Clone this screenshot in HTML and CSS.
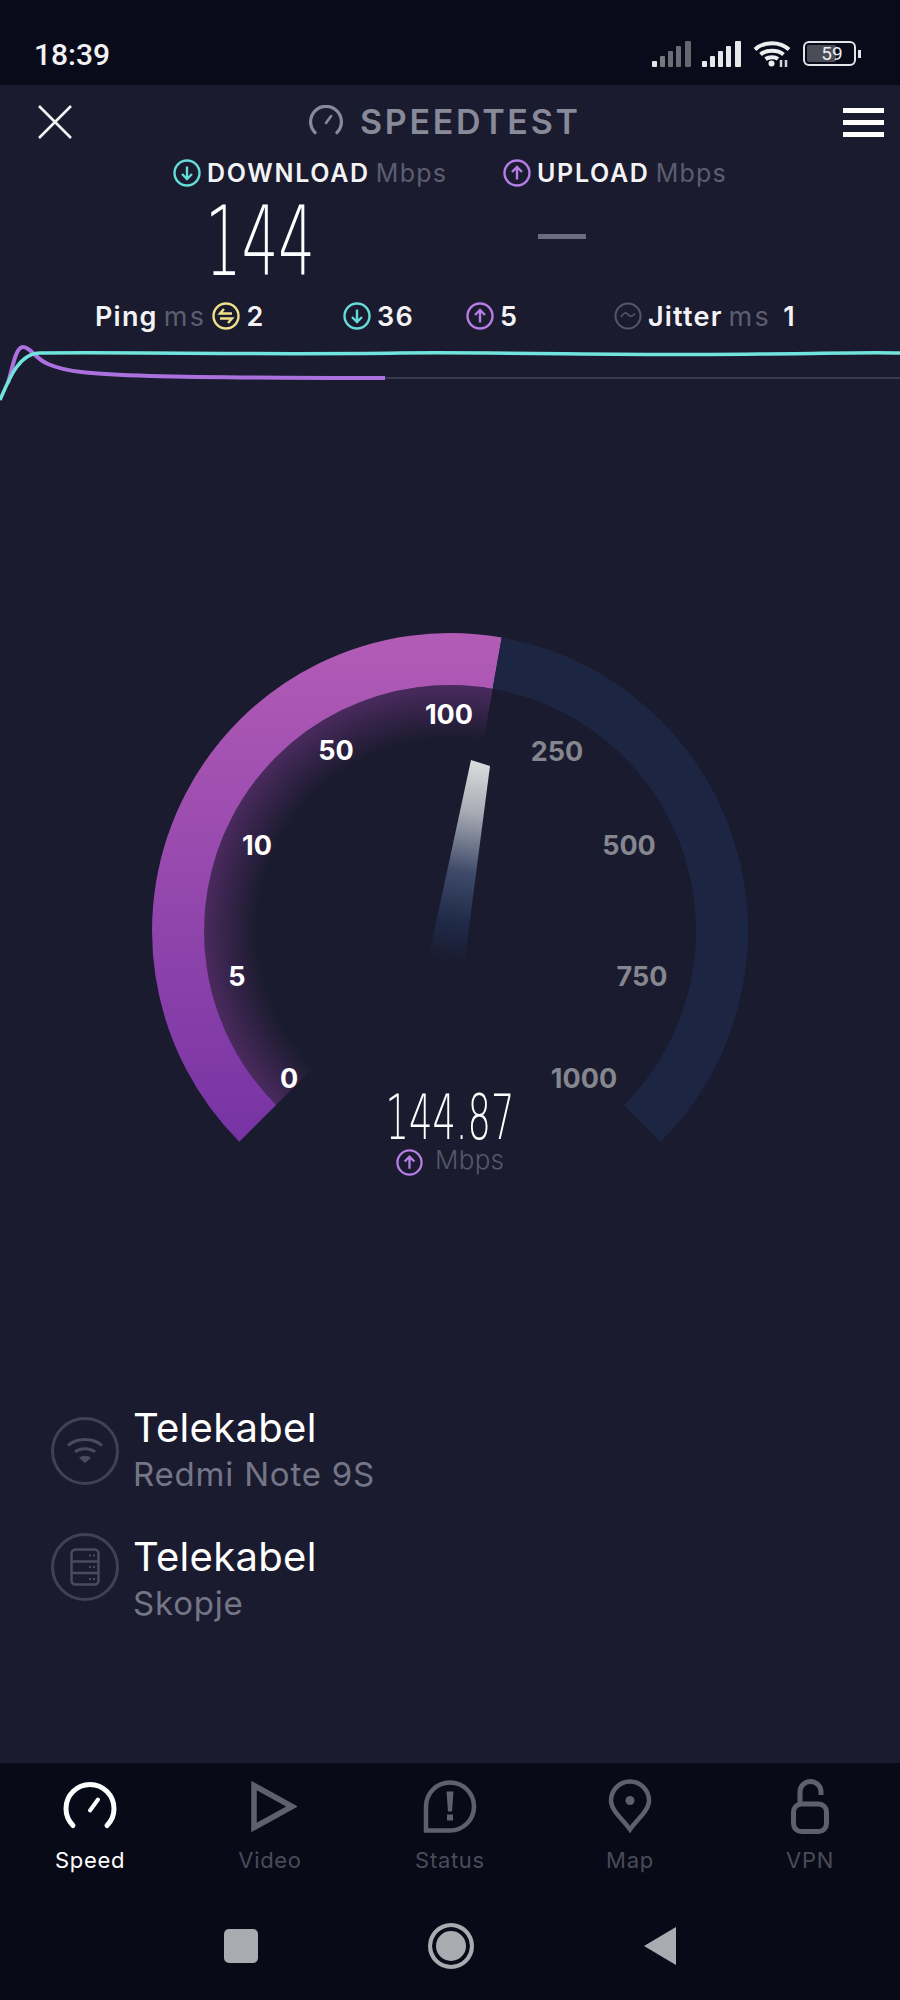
FILE: index.html
```html
<!DOCTYPE html>
<html lang="en">
<head>
    <meta charset="UTF-8">
    <meta name="viewport" content="width=device-width, initial-scale=1.0">
    <title>Speedtest</title>
    <link rel="stylesheet" href="styles.css">
</head>
<body>
    <svg class="defs" width="0" height="0">
        <symbol id="i-down" viewBox="0 0 28 28">
            <circle cx="14" cy="14" r="12.5" fill="none" stroke="currentColor" stroke-width="2.400"/>
            <path d="M14 7.5V20M9 15l5 5 5-5" fill="none" stroke="currentColor" stroke-width="2.400"/>
        </symbol>
        <symbol id="i-up" viewBox="0 0 28 28">
            <circle cx="14" cy="14" r="12.5" fill="none" stroke="currentColor" stroke-width="2.400"/>
            <path d="M14 20.5V8M9 13l5-5 5 5" fill="none" stroke="currentColor" stroke-width="2.400"/>
        </symbol>
        <symbol id="i-gauge" viewBox="0 0 56 48">
            <path d="M11 43A24 24 0 1 1 45 43" fill="none" stroke="currentColor" stroke-width="5" stroke-linecap="round"/>
            <path d="M28 28l8-11" fill="none" stroke="currentColor" stroke-width="4" stroke-linecap="round"/>
        </symbol>
    </svg>

    <div class="status">
        <span class="time">18:39</span>
        <div class="status-icons">
            <svg class="signal" width="40" height="26" viewBox="0 0 40 26">
                <rect x="0" y="20" width="5" height="6" rx="1" fill="#e4e4e6"/>
                <rect x="8" y="15" width="5" height="11" rx="1" fill="#77787f"/>
                <rect x="16" y="10" width="5" height="16" rx="1" fill="#6c6d74"/>
                <rect x="24" y="5" width="5" height="21" rx="1" fill="#6c6d74"/>
                <rect x="33" y="0" width="6" height="26" rx="1" fill="#66676e"/>
            </svg>
            <svg class="signal" width="40" height="26" viewBox="0 0 40 26">
                <rect x="0" y="20" width="5" height="6" rx="1" fill="#e8e8ea"/>
                <rect x="8" y="15" width="5" height="11" rx="1" fill="#e8e8ea"/>
                <rect x="16" y="10" width="5" height="16" rx="1" fill="#e8e8ea"/>
                <rect x="24" y="5" width="5" height="21" rx="1" fill="#e8e8ea"/>
                <rect x="33" y="0" width="6" height="26" rx="1" fill="#e8e8ea"/>
            </svg>
            <svg class="wifi" width="38" height="29" viewBox="0 0 38 29">
                <path d="M2 10.500C11 2 27 2 36 10.500M7.500 15.500C13 10.500 25 10.500 30.500 15.500M12.500 20C16 17.500 22 17.500 25 20" fill="none" stroke="#eeeef0" stroke-width="4"/>
                <circle cx="18.500" cy="24.500" r="3" fill="#eeeef0"/>
                <path d="M28 21v7M33 21v7" stroke="#d5d5d8" stroke-width="2.500"/>
            </svg>
            <div class="battery">
                <div class="battery-body">
                    <div class="battery-fill"></div>
                    <span class="battery-text">59</span>
                </div>
                <div class="battery-nub"></div>
            </div>
        </div>
    </div>

    <div class="topbar">
        <svg class="close" width="34" height="34" viewBox="0 0 34 34">
            <path d="M1 1l32 32M33 1L1 33" stroke="#f4f4f6" stroke-width="2.600" fill="none"/>
        </svg>
        <div class="brand">
            <svg class="brand-icon" width="36" height="31"><use href="#i-gauge"/></svg>
            <span class="brand-text">SPEEDTEST</span>
        </div>
        <div class="menu">
            <div class="menu-bar"></div>
            <div class="menu-bar"></div>
            <div class="menu-bar"></div>
        </div>
    </div>

    <div class="speeds">
        <div class="speed-head">
            <svg class="ic ic-down"><use href="#i-down"/></svg>
            <span class="head-label">DOWNLOAD</span>
            <span class="head-unit">Mbps</span>
        </div>
        <div class="speed-head">
            <svg class="ic ic-up"><use href="#i-up"/></svg>
            <span class="head-label">UPLOAD</span>
            <span class="head-unit">Mbps</span>
        </div>
        <div class="speed-value">144</div>
        <div class="speed-dash"></div>
    </div>

    <div class="stats">
        <div class="stat">
            <span class="stat-label">Ping</span>
            <span class="stat-unit">ms</span>
            <svg class="ic ic-ping" viewBox="0 0 28 28">
                <circle cx="14" cy="14" r="12.500" fill="none" stroke="currentColor" stroke-width="2.400"/>
                <path d="M20 11.500H8l4-4.500M8 16.500h12l-4 4.500" fill="none" stroke="currentColor" stroke-width="2.400"/>
            </svg>
            <span class="stat-label">2</span>
        </div>
        <div class="stat">
            <svg class="ic ic-down"><use href="#i-down"/></svg>
            <span class="stat-label">36</span>
        </div>
        <div class="stat">
            <svg class="ic ic-up"><use href="#i-up"/></svg>
            <span class="stat-label">5</span>
        </div>
        <div class="stat">
            <svg class="ic ic-jitter" viewBox="0 0 28 28">
                <circle cx="14" cy="14" r="12.500" fill="none" stroke="currentColor" stroke-width="2"/>
                <path d="M7 15c3-5 5-5 7-2.500s4 2.500 7-1" fill="none" stroke="currentColor" stroke-width="1.600"/>
            </svg>
            <span class="stat-label">Jitter</span>
            <span class="stat-unit">ms</span>
            <span class="stat-label stat-last">1</span>
        </div>
    </div>

    <svg class="graph" width="900" height="70" viewBox="0 340 900 70">
        <path d="M385 378H900" stroke="#46475a" stroke-width="1.500" fill="none"/>
        <path d="M8 383C13 365 16 347 23 347C31 347 34 358 48 364C66 372 90 374 150 376C230 378 300 378 385 378" stroke="#ab72df" stroke-width="4" fill="none"/>
        <path d="M0 400C8 382 18 353 40 353C150 352 260 355 400 353C520 352 640 356 760 354C810 354 860 352 900 353" stroke="#70e4dd" stroke-width="3.500" fill="none"/>
    </svg>

    <svg class="gauge" width="900" height="570" viewBox="0 620 900 570">
        <defs>
            <linearGradient id="arc-fill" gradientUnits="userSpaceOnUse" x1="0" y1="633" x2="0" y2="1141">
                <stop offset="0" stop-color="#b25cb6"/>
                <stop offset="1" stop-color="#7733a4"/>
            </linearGradient>
            <radialGradient id="arc-glow" gradientUnits="userSpaceOnUse" cx="450" cy="931" r="246">
                <stop offset="0.78" stop-color="#4a2a5e" stop-opacity="0"/>
                <stop offset="1" stop-color="#4a2a5e"/>
            </radialGradient>
            <linearGradient id="needle-fill" gradientUnits="userSpaceOnUse" x1="480" y1="762" x2="446" y2="962">
                <stop offset="0" stop-color="#dcdcde"/>
                <stop offset="0.25" stop-color="#a9abb5"/>
                <stop offset="0.55" stop-color="#3e4a69"/>
                <stop offset="0.8" stop-color="#1f2a48"/>
                <stop offset="1" stop-color="#1a1b2e"/>
            </linearGradient>
        </defs>
        <path d="M276 1105A246 246 0 0 1 492.700 688.700L450 931Z" fill="url(#arc-glow)"/>
        <path class="arc" d="M257.700 1123.300A272 272 0 0 1 497.200 663.100" stroke="url(#arc-fill)"/>
        <path class="arc" d="M497.200 663.100A272 272 0 0 1 642.300 1123.300" stroke="#1c2642"/>
        <path d="M471 760L490 766L464 966L428 960Z" fill="url(#needle-fill)"/>

        <text class="tick" x="449" y="724">100</text>
        <text class="tick" x="336" y="760">50</text>
        <text class="tick" x="257" y="855">10</text>
        <text class="tick" x="237" y="986">5</text>
        <text class="tick" x="289" y="1088">0</text>
        <text class="tick tick-off" x="557" y="761">250</text>
        <text class="tick tick-off" x="629" y="855">500</text>
        <text class="tick tick-off" x="642" y="986">750</text>
        <text class="tick tick-off" x="584" y="1088">1000</text>

        <text class="live" x="0" y="0" transform="translate(450 1139) scale(0.585 1)">144.87</text>
        <use href="#i-up" class="ic-up" x="396" y="1149" width="27" height="27"/>
        <text class="live-unit" x="435" y="1169">Mbps</text>
    </svg>

    <div class="networks">
        <div class="network">
            <div class="net-icon">
                <svg width="36" height="30" viewBox="0 0 36 30">
                    <path d="M1 9.500C10 1.500 26 1.500 35 9.500M8 16c5-4.500 15-4.500 20 0" fill="none" stroke="#4a4c5e" stroke-width="3"/>
                    <path d="M18 27l-6-5c3-3 9-3 12 0z" fill="#4a4c5e"/>
                </svg>
            </div>
            <div>
                <div class="net-name">Telekabel</div>
                <div class="net-sub">Redmi Note 9S</div>
            </div>
        </div>
        <div class="network">
            <div class="net-icon">
                <svg width="30" height="38" viewBox="0 0 30 38">
                    <rect x="1.500" y="1.500" width="27" height="35" rx="4" fill="none" stroke="#4a4c5e" stroke-width="2.500"/>
                    <path d="M1.500 13.500h27M1.500 25h27" stroke="#4a4c5e" stroke-width="2.500"/>
                    <path d="M19 7.500h6M19 19h6M19 31h6" stroke="#4a4c5e" stroke-width="2" stroke-dasharray="2 2"/>
                </svg>
            </div>
            <div class="net-lower">
                <div class="net-name">Telekabel</div>
                <div class="net-sub">Skopje</div>
            </div>
        </div>
    </div>

    <div class="bottom">
        <nav class="tabs">
            <div class="tab tab-on">
                <svg class="tab-icon" width="56" height="48"><use href="#i-gauge"/></svg>
                <span>Speed</span>
            </div>
            <div class="tab">
                <svg class="tab-icon tab-play" width="46" height="52" viewBox="0 0 46 52">
                    <path d="M3 5L41 26L3 47Z" fill="none" stroke="currentColor" stroke-width="5.500"/>
                </svg>
                <span>Video</span>
            </div>
            <div class="tab">
                <svg class="tab-icon" width="54" height="54" viewBox="0 0 54 54">
                    <path d="M3 51V27A24 24 0 1 1 27 51Z" fill="none" stroke="currentColor" stroke-width="4.500"/>
                    <path d="M23.500 12h7l-1.500 20h-4z" fill="currentColor"/>
                    <rect x="24" y="35" width="6" height="6" fill="currentColor"/>
                </svg>
                <span>Status</span>
            </div>
            <div class="tab">
                <svg class="tab-icon" width="44" height="54" viewBox="0 0 44 54">
                    <path d="M22 50C15 40 3 31 3 21A19 19 0 0 1 41 21C41 31 29 40 22 50Z" fill="none" stroke="currentColor" stroke-width="4.500"/>
                    <circle cx="22" cy="21" r="4.500" fill="currentColor"/>
                </svg>
                <span>Map</span>
            </div>
            <div class="tab">
                <svg class="tab-icon" width="38" height="55" viewBox="0 0 38 55">
                    <rect x="2.500" y="25" width="33" height="27.500" rx="8" fill="none" stroke="currentColor" stroke-width="5"/>
                    <path d="M9 25V13A10.500 10.500 0 0 1 30 13V16" fill="none" stroke="currentColor" stroke-width="5"/>
                </svg>
                <span>VPN</span>
            </div>
        </nav>
        <div class="sysnav">
            <div class="sys-square"></div>
            <div class="sys-circle"></div>
            <svg width="32" height="38" viewBox="0 0 32 38">
                <path d="M32 0V38L0 19Z" fill="#aaabb0"/>
            </svg>
        </div>
    </div>
</body>
</html>
```

FILE: styles.css
```css
* {
    box-sizing: border-box;
}
body {
    margin: 0;
    width: 900px;
    height: 2000px;
    display: flex;
    flex-direction: column;
    background: #1a1b2e;
    color: #fff;
    font-family: Inter, "Noto Sans", sans-serif;
    overflow: hidden;
}
svg {
    display: block;
    flex: none;
}
.defs {
    position: absolute;
}

/* status bar */
.status {
    height: 85px;
    background: #0a0b1a;
    display: flex;
    justify-content: space-between;
    padding: 39px 39px 0 34px;
}
.time {
    font-family: Roboto, sans-serif;
    font-size: 30px;
    font-weight: 500;
    line-height: 32px;
    color: #f2f2f4;
}
.status-icons {
    display: flex;
    align-items: flex-start;
    gap: 10px;
    padding-top: 2px;
}
.wifi {
    margin: -2px 2px 0 1px;
}
.battery {
    display: flex;
    align-items: center;
    gap: 2px;
}
.battery-body {
    position: relative;
    width: 53px;
    height: 25px;
    border: 2px solid #e4e4e6;
    border-radius: 6px;
    padding: 2px;
}
.battery-fill {
    width: 29px;
    height: 100%;
    background: #4b4c55;
    border-radius: 2px;
}
.battery-text {
    position: absolute;
    left: 13px;
    top: 0;
    width: 28px;
    text-align: center;
    font-family: Roboto, sans-serif;
    font-size: 19px;
    line-height: 21px;
    color: #ececee;
}
.battery-nub {
    width: 3px;
    height: 8px;
    background: #e4e4e6;
}

/* header */
.topbar {
    height: 66px;
    display: grid;
    grid-template-columns: 270px 1fr 41px;
    align-items: center;
    padding: 8px 16px 0 38px;
}
.brand {
    display: flex;
    align-items: center;
    gap: 16px;
    color: #888a99;
}
.brand-icon {
    margin-top: -4px;
}
.brand-text {
    font-size: 34px;
    font-weight: 600;
    letter-spacing: 2.700px;
    line-height: 40px;
}
.menu {
    display: flex;
    flex-direction: column;
    gap: 7px;
}
.menu-bar {
    height: 5px;
    background: #fff;
}

.ic {
    width: 28px;
    height: 28px;
}
.ic-down {
    color: #66dcd8;
}
.ic-up {
    color: #b57de6;
}
.ic-ping {
    color: #efe08c;
}
.ic-jitter {
    color: #55576a;
}

/* download / upload */
.speeds {
    display: grid;
    grid-template-columns: 330px auto;
    padding: 8px 0 0 173px;
}
.speed-head {
    display: flex;
    align-items: center;
    height: 28px;
    gap: 6px;
    white-space: nowrap;
}
.head-label {
    font-size: 25px;
    font-weight: 600;
    letter-spacing: 1.700px;
    color: #f3f3f5;
}
.head-unit {
    font-size: 25px;
    letter-spacing: 1.200px;
    color: #5c5e70;
}
.speed-value {
    height: 70px;
    margin: 20px 0 0 32px;
    font-family: "DejaVu Sans", sans-serif;
    font-size: 96px;
    font-weight: 200;
    line-height: 70px;
    transform: scaleX(0.6);
    transform-origin: left;
}
.speed-dash {
    width: 48px;
    height: 5px;
    margin: 47px 0 0 35px;
    background: #6b6d7e;
}

/* ping row */
.stats {
    display: grid;
    grid-template-columns: 248px 123px 148px auto;
    padding-left: 95px;
    margin-top: 25px;
}
.stat {
    display: flex;
    align-items: center;
    height: 28px;
    gap: 6px;
    white-space: nowrap;
    font-size: 27px;
    letter-spacing: 1.200px;
}
.stat-label {
    font-weight: 600;
    color: #f3f3f5;
}
.stat-unit {
    letter-spacing: 2.400px;
    color: #5c5e70;
}
.stat-last {
    margin-left: 6px;
}

.graph {
    margin-top: 10px;
}
.gauge {
    margin-top: 210px;
}
.arc {
    fill: none;
    stroke-width: 52;
}
.tick {
    font-size: 27px;
    font-weight: 700;
    fill: #fff;
    text-anchor: middle;
}
.tick-off {
    fill: #85868f;
}
.live {
    font-family: "DejaVu Sans", sans-serif;
    font-size: 63px;
    font-weight: 200;
    fill: #fff;
    text-anchor: middle;
}
.live-unit {
    font-size: 26px;
    font-weight: 300;
    letter-spacing: 0.300px;
    fill: #55576a;
}

/* network list */
.networks {
    display: flex;
    flex-direction: column;
    gap: 48px;
    margin: 227px 0 0 51px;
}
.network {
    display: flex;
    align-items: center;
    height: 68px;
    gap: 14px;
}
.net-lower {
    margin-top: 26px;
}
.net-icon {
    width: 68px;
    height: 68px;
    border: 3px solid #404254;
    border-radius: 50%;
    display: flex;
    align-items: center;
    justify-content: center;
}
.net-name {
    font-size: 40px;
    letter-spacing: 0.300px;
    line-height: 47px;
    color: #fff;
}
.net-sub {
    font-size: 33px;
    letter-spacing: 0.800px;
    line-height: 47px;
    color: #747688;
}

/* bottom navigation */
.bottom {
    margin-top: auto;
    height: 237px;
    background: #090a18;
}
.tabs {
    display: grid;
    grid-template-columns: repeat(5, 180px);
    height: 125px;
    padding-top: 16px;
}
.tab {
    display: flex;
    flex-direction: column;
    align-items: center;
    color: #5f606e;
    font-size: 22px;
    letter-spacing: 0.700px;
}
.tab-icon {
    margin-bottom: 13px;
    height: 55px;
}
.tab-play {
    margin-left: 8px;
}
.tab span {
    color: #4a4b59;
}
.tab-on,
.tab-on span {
    color: #fff;
}
.sysnav {
    display: flex;
    align-items: center;
    justify-content: center;
    padding-top: 36px;
    height: 80px;
}
.sys-square {
    width: 34px;
    height: 34px;
    background: #aaabb0;
    border-radius: 5px;
    margin-right: 170px;
}
.sys-circle {
    width: 46px;
    height: 46px;
    border: 4px solid #aaabb0;
    border-radius: 50%;
    background: #aaabb0;
    box-shadow: inset 0 0 0 4px #090a18;
    margin-right: 170px;
}
```
